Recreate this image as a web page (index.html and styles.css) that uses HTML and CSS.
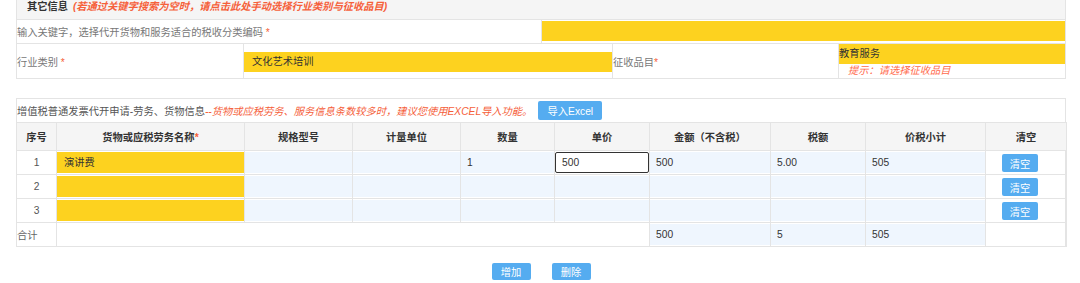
FILE: index.html
```html
<!DOCTYPE html>
<html lang="zh-CN">
<head>
    <meta charset="UTF-8">
    <title>代开申请</title>
    <link rel="stylesheet" href="styles.css">
</head>
<body>
    <div class="page">
        <!-- 其它信息 -->
        <div class="panel">
            <div class="panel-head">
                <b>其它信息</b>
                <span class="warn strong">(若通过关键字搜索为空时，请点击此处手动选择行业类别与征收品目)</span>
            </div>
            <div class="row row-key">
                <div class="cell lbl"><span>输入关键字，选择代开货物和服务适合的税收分类编码 <span class="req">*</span></span></div>
                <div class="cell"><div class="yin"></div></div>
            </div>
            <div class="row row-cat">
                <div class="cell lbl"><span>行业类别 <span class="req">*</span></span></div>
                <div class="cell mid"><div class="yin">文化艺术培训</div></div>
                <div class="cell lbl"><span>征收品目<span class="req">*</span></span></div>
                <div class="cell">
                    <div class="yin flat">教育服务</div>
                    <div class="hint">提示：请选择征收品目</div>
                </div>
            </div>
        </div>

        <!-- 货物信息 -->
        <div class="panel goods">
            <div class="goods-title">
                <span class="title-text">增值税普通发票代开申请-劳务、货物信息</span><span class="warn">--货物或应税劳务、服务信息条数较多时，建议您使用EXCEL导入功能。</span>
                <button class="btn btn-import">导入Excel</button>
            </div>
            <table class="grid">
                <colgroup>
                    <col style="width:40px"><col style="width:188px"><col style="width:108px"><col style="width:108px">
                    <col style="width:94px"><col style="width:95px"><col style="width:121px"><col style="width:95px">
                    <col style="width:120px"><col style="width:81px">
                </colgroup>
                <thead>
                    <tr>
                        <th>序号</th>
                        <th>货物或应税劳务名称<span class="req">*</span></th>
                        <th>规格型号</th>
                        <th>计量单位</th>
                        <th>数量</th>
                        <th>单价</th>
                        <th>金额（不含税）</th>
                        <th>税额</th>
                        <th>价税小计</th>
                        <th>清空</th>
                    </tr>
                </thead>
                <tbody>
                    <tr>
                        <td class="no">1</td>
                        <td><div class="fld yel">演讲费</div></td>
                        <td><div class="fld"></div></td>
                        <td><div class="fld"></div></td>
                        <td><div class="fld">1</div></td>
                        <td><div class="fld focus">500</div></td>
                        <td><div class="fld">500</div></td>
                        <td><div class="fld">5.00</div></td>
                        <td><div class="fld">505</div></td>
                        <td class="ops"><button class="btn btn-clear">清空</button></td>
                    </tr>
                    <tr>
                        <td class="no">2</td>
                        <td><div class="fld yel"></div></td>
                        <td><div class="fld"></div></td>
                        <td><div class="fld"></div></td>
                        <td><div class="fld"></div></td>
                        <td><div class="fld"></div></td>
                        <td><div class="fld"></div></td>
                        <td><div class="fld"></div></td>
                        <td><div class="fld"></div></td>
                        <td class="ops"><button class="btn btn-clear">清空</button></td>
                    </tr>
                    <tr>
                        <td class="no">3</td>
                        <td><div class="fld yel"></div></td>
                        <td><div class="fld"></div></td>
                        <td><div class="fld"></div></td>
                        <td><div class="fld"></div></td>
                        <td><div class="fld"></div></td>
                        <td><div class="fld"></div></td>
                        <td><div class="fld"></div></td>
                        <td><div class="fld"></div></td>
                        <td class="ops"><button class="btn btn-clear">清空</button></td>
                    </tr>
                    <tr class="total">
                        <td class="sum-lbl">合计</td>
                        <td colspan="5"></td>
                        <td><div class="fld">500</div></td>
                        <td><div class="fld">5</div></td>
                        <td><div class="fld">505</div></td>
                        <td></td>
                    </tr>
                </tbody>
            </table>
        </div>

        <div class="actions">
            <button class="btn btn-act">增加</button>
            <button class="btn btn-act">删除</button>
        </div>
    </div>
</body>
</html>
```

FILE: styles.css
```css
body {
    margin: 0;
    font-family: "Liberation Sans", "Noto Sans CJK SC", sans-serif;
    font-size: 10.25px;
    color: #333;
    background: #fff;
}
.page {
    width: 1050px;
    margin-left: 16px;
}
.panel {
    border-left: 1px solid #e4e4e4;
    border-right: 1px solid #e4e4e4;
}
.panel-head {
    height: 19px;
    line-height: 14px;
    padding-left: 10px;
    background: #f5f5f5;
    border-bottom: 1px solid #e4e4e4;
}
.panel-head b {
    color: #333;
}
.warn {
    color: #f5603a;
    font-style: italic;
}
.warn.strong {
    font-weight: bold;
    margin-left: 2px;
}
.req {
    color: #f5603a;
}
.row {
    display: flex;
    border-bottom: 1px solid #e4e4e4;
}
.row-key {
    height: 23px;
}
.row-key .cell:first-child {
    width: 524px;
    border-right: 1px solid #e4e4e4;
}
.row-key .cell:last-child {
    flex: 1;
    padding-top: 1px;
}
.row-cat {
    height: 34px;
}
.row-cat .cell {
    border-right: 1px solid #e4e4e4;
}
.row-cat .cell:nth-child(1) { width: 226px; }
.row-cat .cell:nth-child(2) { width: 368px; }
.row-cat .cell:nth-child(3) { width: 225px; }
.row-cat .cell:nth-child(4) { flex: 1; border-right: 0; }
.cell.lbl {
    display: flex;
    align-items: center;
    color: #777;
    white-space: nowrap;
}
.cell.mid {
    display: flex;
    align-items: center;
}
.cell.mid .yin {
    flex: 1;
    margin-top: 2px;
}
.yin {
    height: 20px;
    line-height: 20px;
    padding-left: 8px;
    background: #fdd21f;
    color: #333;
}
.yin.flat {
    padding-left: 0;
}
.hint {
    padding-left: 9px;
    line-height: 14px;
    color: #ff6a4d;
    font-style: italic;
}

.goods {
    margin-top: 19px;
    border-top: 1px solid #e4e4e4;
}
.goods-title {
    height: 23px;
    display: flex;
    align-items: center;
    white-space: nowrap;
}
.title-text {
    color: #555;
}
.btn {
    font-family: inherit;
    font-size: 10.25px;
    color: #fff;
    background: #55acf0;
    border: 0;
    border-radius: 2px;
    padding: 0;
    cursor: pointer;
}
.btn-import {
    margin-left: 6px;
    width: 64px;
    height: 19px;
}
.grid {
    width: 1050px;
    margin-left: -1px;
    border-collapse: collapse;
    table-layout: fixed;
}
.grid th,
.grid td {
    border: 1px solid #e4e4e4;
    padding: 0;
}
.grid th {
    height: 27px;
    background: #f5f5f5;
    font-weight: bold;
    color: #333;
}
.grid td {
    height: 23px;
}
.grid td.no {
    text-align: center;
    color: #555;
}
.grid td.ops {
    padding-left: 16px;
}
.fld {
    height: 21px;
    line-height: 21px;
    margin: 1px 0;
    padding-left: 6px;
    background: #eff6fe;
    color: #333;
    box-sizing: border-box;
}
.fld.yel {
    background: #fdd21f;
    padding-left: 7px;
}
.fld.focus {
    background: #fff;
    border: 1px solid #333;
    border-radius: 2px;
    line-height: 19px;
}
.btn-clear {
    width: 36px;
    height: 18px;
    margin-top: 1px;
    vertical-align: middle;
}
.total td {
    height: 23px;
}
.total .sum-lbl {
    color: #666;
}
.actions {
    margin-top: 16px;
    display: flex;
    justify-content: center;
    gap: 21px;
}
.btn-act {
    width: 39px;
    height: 17px;
}
```
